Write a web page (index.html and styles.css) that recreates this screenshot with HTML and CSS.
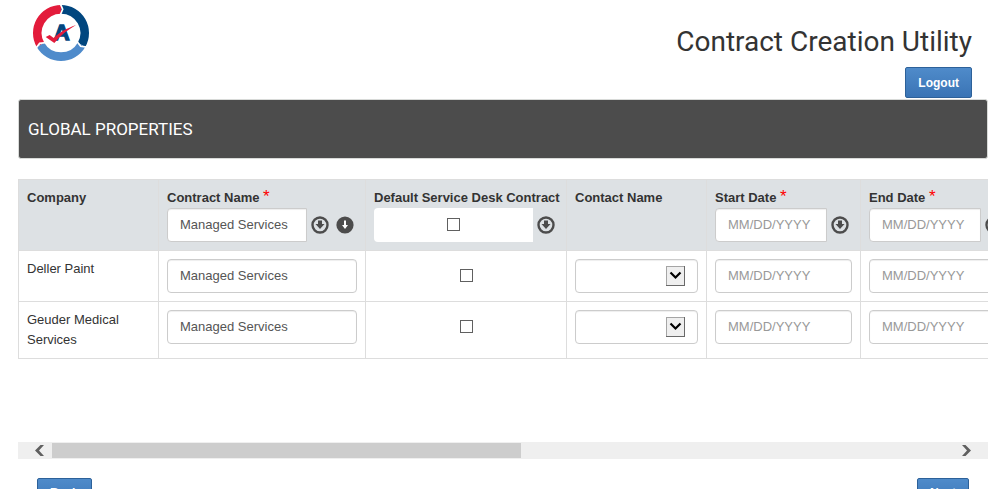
FILE: index.html
```html
<!DOCTYPE html>
<html lang="en">
<head>
	<meta charset="UTF-8">
	<title>Contract Creation Utility</title>
	<link rel="stylesheet" href="styles.css">
</head>
<body>
	<svg class="sprite" aria-hidden="true">
		<symbol id="fill-all" viewBox="0 0 18 18">
			<circle cx="9" cy="9" r="7.500" fill="none" stroke="currentColor" stroke-width="2.400"/>
			<path d="M7 4.500h4V8h2.500L9 13 4.500 8H7z" fill="currentColor"/>
		</symbol>
		<symbol id="fill-empty" viewBox="0 0 18 18">
			<circle cx="9" cy="9" r="8.600" fill="currentColor"/>
			<path d="M8 4.500h2v4.500h2L9 13 6 9h2z" fill="#fff"/>
		</symbol>
	</svg>
	<header class="header">
		<svg class="logo" viewBox="36 11 174 174" role="img" aria-label="Logo">
			<g fill="none" stroke-width="26">
				<path d="M123 27A71 71 0 0 0 61.5 133.5" stroke="#e31b3b"/>
				<path d="M123 27A71 71 0 0 1 184.5 133.5" stroke="#00467f"/>
				<path d="M61.5 133.5A71 71 0 0 0 184.5 133.5" stroke="#4f8bcb"/>
			</g>
			<g fill="none" stroke="#fff" stroke-width="5">
				<path d="M120 8l8 19-8 19"/>
				<path d="M120 8l8 19-8 19" transform="rotate(120 123 98)"/>
				<path d="M120 8l8 19-8 19" transform="rotate(240 123 98)"/>
			</g>
			<text class="logo-letter" x="125" y="119" text-anchor="middle">A</text>
			<path d="M77 110l12-6 12 9c18-17 39-29 67-39-26 15-47 32-65 54z" fill="#e31b3b"/>
		</svg>
		<div class="header-right">
			<h1 class="title">Contract Creation Utility</h1>
			<button type="button" class="btn">Logout</button>
		</div>
	</header>
	<main class="content">
		<h2 class="panel-title">GLOBAL PROPERTIES</h2>
		<div class="table-wrap">
			<table class="grid">
				<colgroup>
					<col class="col-company">
					<col class="col-contract">
					<col class="col-default">
					<col class="col-contact">
					<col class="col-date">
					<col class="col-date">
				</colgroup>
				<thead>
					<tr>
						<th>Company</th>
						<th>
							<label for="name-all">Contract Name <span class="required">*</span></label>
							<div class="fill">
								<input type="text" id="name-all" class="field" value="Managed Services">
								<button type="button" class="icon-btn" aria-label="Fill all names"><svg class="icon"><use href="#fill-all"/></svg></button>
								<button type="button" class="icon-btn" aria-label="Fill empty names"><svg class="icon"><use href="#fill-empty"/></svg></button>
							</div>
						</th>
						<th>
							<label for="default-all">Default Service Desk Contract</label>
							<div class="fill">
								<span class="check-box white"><input type="checkbox" id="default-all" class="check"></span>
								<button type="button" class="icon-btn" aria-label="Fill all defaults"><svg class="icon"><use href="#fill-all"/></svg></button>
							</div>
						</th>
						<th>Contact Name</th>
						<th>
							<label for="start-all">Start Date <span class="required">*</span></label>
							<div class="fill">
								<input type="text" id="start-all" class="field" placeholder="MM/DD/YYYY">
								<button type="button" class="icon-btn" aria-label="Fill all start dates"><svg class="icon"><use href="#fill-all"/></svg></button>
							</div>
						</th>
						<th>
							<label for="end-all">End Date <span class="required">*</span></label>
							<div class="fill">
								<input type="text" id="end-all" class="field" placeholder="MM/DD/YYYY">
								<button type="button" class="icon-btn" aria-label="Fill all end dates"><svg class="icon"><use href="#fill-all"/></svg></button>
							</div>
						</th>
					</tr>
				</thead>
				<tbody>
					<tr>
						<td>Deller Paint</td>
						<td><input type="text" class="field" value="Managed Services" aria-label="Contract Name"></td>
						<td><span class="check-box"><input type="checkbox" class="check" aria-label="Default Service Desk Contract"></span></td>
						<td><select class="field select" aria-label="Contact Name"><option></option></select></td>
						<td><input type="text" class="field" placeholder="MM/DD/YYYY" aria-label="Start Date"></td>
						<td><input type="text" class="field" placeholder="MM/DD/YYYY" aria-label="End Date"></td>
					</tr>
					<tr>
						<td>Geuder Medical Services</td>
						<td><input type="text" class="field" value="Managed Services" aria-label="Contract Name"></td>
						<td><span class="check-box"><input type="checkbox" class="check" aria-label="Default Service Desk Contract"></span></td>
						<td><select class="field select" aria-label="Contact Name"><option></option></select></td>
						<td><input type="text" class="field" placeholder="MM/DD/YYYY" aria-label="Start Date"></td>
						<td><input type="text" class="field" placeholder="MM/DD/YYYY" aria-label="End Date"></td>
					</tr>
				</tbody>
			</table>
		</div>
		<div class="scrollbar">
			<button type="button" class="scroll-btn" aria-label="Scroll left"><svg class="arrow" viewBox="0 0 9 11"><path d="M9 0H5.500L0 5.500 5.500 11H9L4 5.500z" fill="#606060"/></svg></button>
			<div class="track"><div class="thumb"></div></div>
			<button type="button" class="scroll-btn right" aria-label="Scroll right"><svg class="arrow" viewBox="0 0 9 11"><path d="M0 0h3.500L9 5.500 3.500 11H0l5-5.500z" fill="#606060"/></svg></button>
		</div>
	</main>
	<footer class="footer">
		<button type="button" class="btn">Back</button>
		<button type="button" class="btn">Next</button>
	</footer>
</body>
</html>
```

FILE: styles.css
```css
*{
	box-sizing: border-box;
}
html{
	scrollbar-width: none;
}
body{
	margin: 0;
	background-color: #fff;
	color: #333;
	font: 13px/20px "Liberation Sans", Arial, sans-serif;
}
h1, h2{
	margin: 0;
	font-weight: normal;
	font-family: Roboto, "Liberation Sans", sans-serif;
}
.sprite{
	display: none;
}

/* header */
.header{
	display: flex;
	justify-content: space-between;
	padding: 4px 34px 1px 32px;
}
.logo{
	width: 58px;
	height: 58px;
}
.logo-letter{
	font: bold 66px "Liberation Sans", sans-serif;
	fill: #00467f;
	stroke: #00467f;
	stroke-width: 4px;
}
.header-right{
	display: flex;
	flex-direction: column;
	align-items: flex-end;
	gap: 7px;
	padding-top: 20px;
}
.title{
	font-size: 28px;
	line-height: 36px;
}
.btn{
	height: 31px;
	padding: 0 12px;
	border: 1px solid #2d6199;
	border-radius: 2px;
	background: linear-gradient(#4f8bca, #3a74b5);
	color: #fff;
	font: bold 12px "Liberation Sans", sans-serif;
}

/* content */
.content{
	padding: 0 18px;
}
.panel-title{
	margin-bottom: 20px;
	padding: 19px 9px;
	border: 1px solid #d8dad8;
	border-radius: 3px;
	background-color: #4c4c4c;
	color: #fff;
	font-size: 17px;
}
.table-wrap{
	min-height: 263px;
	overflow: hidden;
}
.grid{
	width: 996px;
	table-layout: fixed;
	border-collapse: collapse;
}
.col-company, .col-contact{
	width: 140px;
}
.col-contract{
	width: 207px;
}
.col-default{
	width: 201px;
}
.col-date{
	width: 154px;
}
.grid th, .grid td{
	padding: 8px;
	border: 1px solid #ddd;
	text-align: left;
	vertical-align: top;
}
.grid th{
	background-color: #dde1e4;
	white-space: nowrap;
}
.grid label{
	display: block;
	height: 20px;
}
.required{
	color: #f00;
	font-size: 17px;
	font-weight: normal;
	line-height: 16px;
}
.fill{
	display: flex;
	align-items: center;
	gap: 4px;
}
.fill .field, .fill .check-box{
	flex: 1;
	min-width: 0;
	border-radius: 4px 0 0 4px;
}
.field{
	display: block;
	width: 100%;
	height: 34px;
	padding: 0 12px 2px;
	border: 1px solid #ccc;
	border-radius: 4px;
	background-color: #fff;
	box-shadow: inset 0 1px 1px rgba(0, 0, 0, .07);
	color: #555;
	font: 13px "Liberation Sans", Arial, sans-serif;
}
.field::placeholder{
	color: #999;
}
.select{
	appearance: none;
	background: #fff url("data:image/svg+xml,%3Csvg xmlns='http://www.w3.org/2000/svg' width='19' height='20'%3E%3Cpath d='M0 0h19v20H0z' fill='%23696969'/%3E%3Cpath d='M0 0h18v19H0z' fill='%23a5a5a5'/%3E%3Cpath d='M1 1h17v18H1z' fill='%23efefef'/%3E%3Cpath d='M4.500 6.500l5 5 5-5' fill='none' stroke='%23000' stroke-width='2.200'/%3E%3C/svg%3E") no-repeat right 12px center;
}
.check-box{
	display: flex;
	align-items: center;
	justify-content: center;
	height: 34px;
}
.white{
	background-color: #fff;
}
.check{
	appearance: none;
	width: 13px;
	height: 13px;
	margin: 0 0 2px;
	border: 1px solid #606060;
	background-color: #fff;
}
.icon-btn{
	display: flex;
	width: 18px;
	height: 18px;
	padding: 0;
	border: none;
	background: none;
	color: #4c4c4c;
}
.icon-btn + .icon-btn{
	margin-left: 3px;
}
.icon-btn:last-child{
	margin-right: 3px;
}
.icon{
	width: 18px;
	height: 18px;
}

/* scrollbar */
.scrollbar{
	display: flex;
	height: 17px;
	background-color: #efefef;
}
.scroll-btn{
	display: flex;
	align-items: center;
	justify-content: flex-end;
	width: 34px;
	padding: 0 8px;
	border: none;
	background: none;
}
.scroll-btn.right{
	padding: 0 17px;
}
.arrow{
	flex: none;
	width: 9px;
	height: 11px;
}
.track{
	flex: 1;
	padding: 1px 0;
}
.thumb{
	width: 52%;
	height: 15px;
	background-color: #cdcdcd;
}

.footer{
	display: flex;
	justify-content: space-between;
	padding: 19px 37px;
}
.footer .btn{
	padding-bottom: 2px;
}
```
